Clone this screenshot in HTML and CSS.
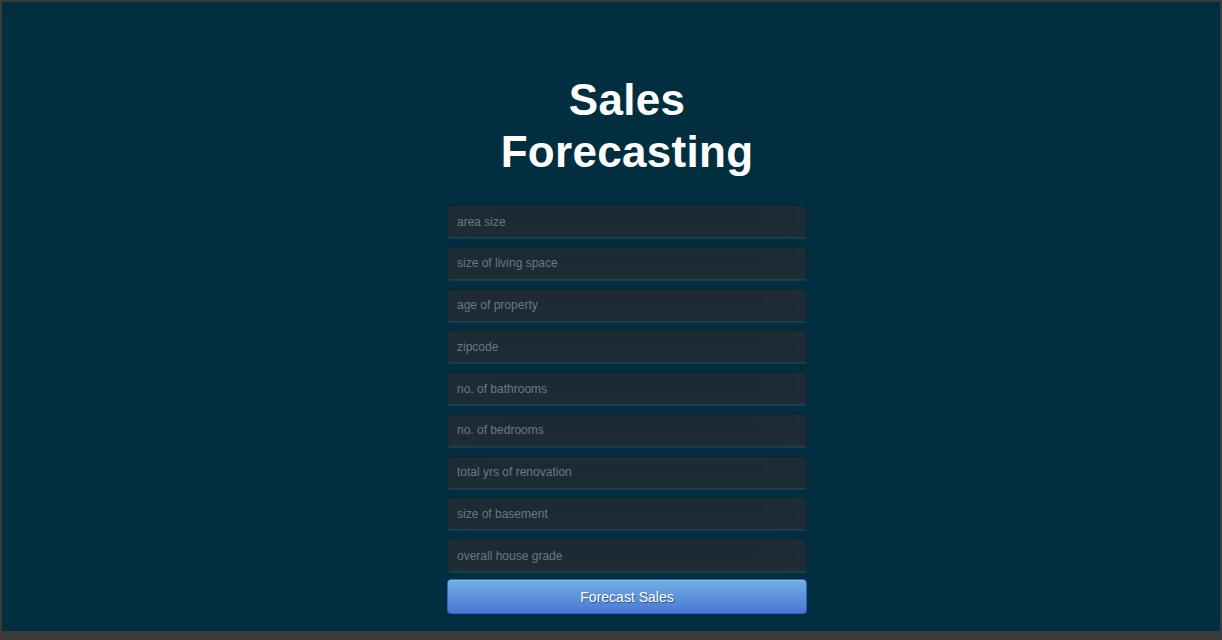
FILE: index.html
```html
<!DOCTYPE html>
<html>
<head>
<meta charset="utf-8">
<title>Sales Forecasting</title>
<link rel="stylesheet" href="styles.css">
</head>
<body>
<div class="frame">
  <main class="page">
    <div class="login">
      <h1 class="title">Sales Forecasting</h1>
      <form class="form">
        <input class="field" type="text" placeholder="area size">
        <input class="field" type="text" placeholder="size of living space">
        <input class="field" type="text" placeholder="age of property">
        <input class="field" type="text" placeholder="zipcode">
        <input class="field" type="text" placeholder="no. of bathrooms">
        <input class="field" type="text" placeholder="no. of bedrooms">
        <input class="field" type="text" placeholder="total yrs of renovation">
        <input class="field" type="text" placeholder="size of basement">
        <input class="field" type="text" placeholder="overall house grade">
        <button class="btn" type="button">Forecast Sales</button>
      </form>
    </div>
  </main>
</div>
</body>
</html>
```

FILE: styles.css
```css
html, body {
  margin: 0;
  padding: 0;
  height: 100%;
  background: #3b3b3b;
  font-family: "Liberation Sans", Arial, Helvetica, sans-serif;
}
.frame {
  height: 640px;
  padding: 2px 2px 0 2px;
  box-sizing: border-box;
  background: #3b3b3b;
}
.page {
  height: 629px;
  background: #022f3f;
  display: flex;
  justify-content: center;
}
.login {
  width: 360px;
  padding-top: 72px;
  margin-left: 32px;
}
.title {
  margin: 0 0 27px 0;
  color: #ffffff;
  font-size: 44px;
  line-height: 52px;
  font-weight: bold;
  text-align: center;
  letter-spacing: 0.3px;
}
.form {
  display: flex;
  flex-direction: column;
}
.field {
  height: 33px;
  margin: 0 0 8.75px 0;
  padding: 0 9px;
  box-sizing: border-box;
  width: 360px;
  background: #1b2a34;
  border: 1px solid #13222b;
  border-bottom-color: #24404f;
  border-radius: 4px;
  box-shadow: inset 0 -5px 45px rgba(100,100,100,0.06), 0 1px 1px rgba(255,255,255,0.08);
  color: #b8c2c6;
  font-family: "Liberation Sans", Arial, Helvetica, sans-serif;
  font-size: 12px;
  outline: none;
}
.field::placeholder {
  color: #6b7a7e;
}
.field:last-of-type {
  margin-bottom: 7px;
}
.btn {
  height: 35px;
  width: 360px;
  border: 1px solid #3762bc;
  border-radius: 4px;
  background: linear-gradient(to bottom, #6eb1e4, #4a77d4);
  color: #ffffff;
  font-family: "Liberation Sans", Arial, Helvetica, sans-serif;
  font-size: 14px;
  text-shadow: 1px 1px 1px rgba(0,0,0,0.4);
  box-shadow: inset 0 1px 0 rgba(255,255,255,0.2);
  cursor: pointer;
}
```
